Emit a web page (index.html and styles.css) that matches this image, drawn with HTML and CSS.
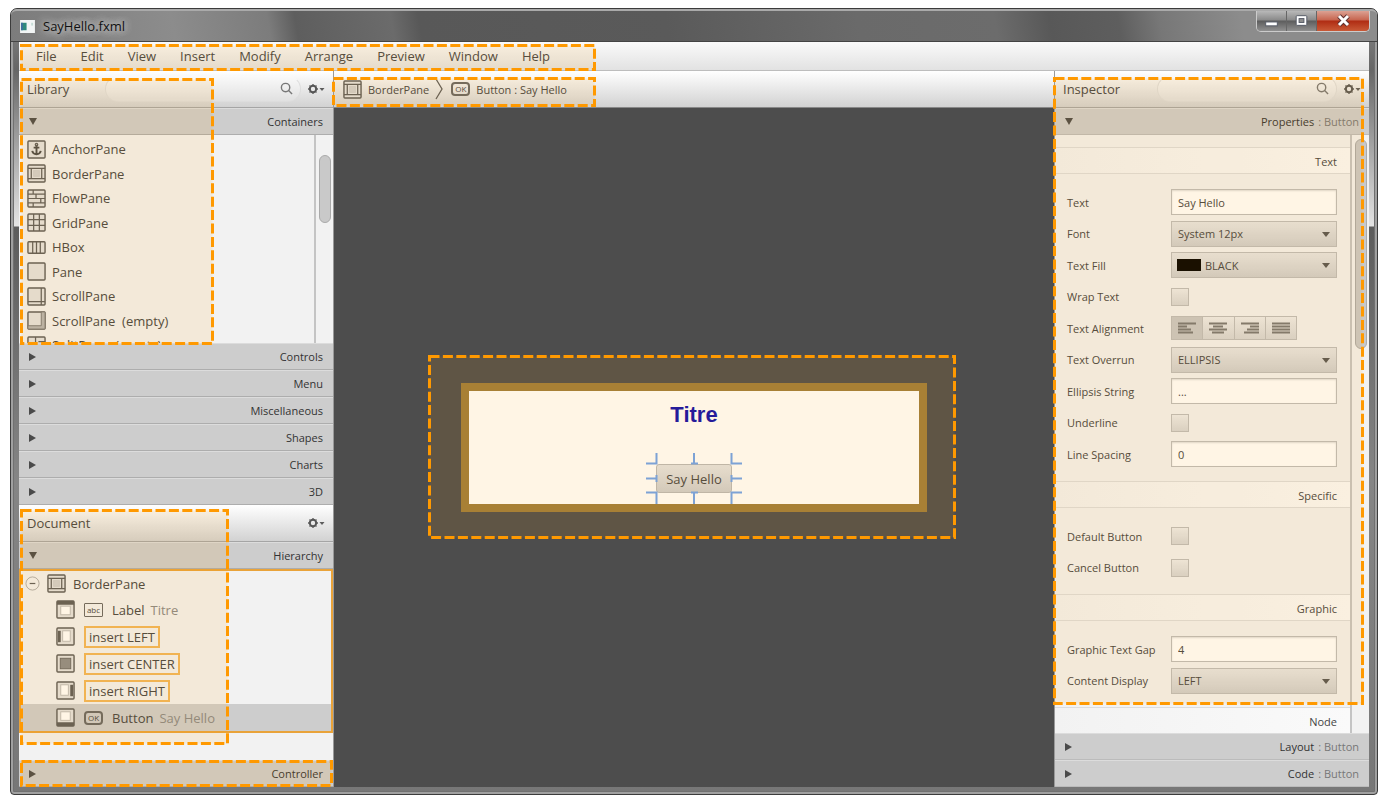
FILE: index.html
```html
<!DOCTYPE html>
<html lang="en">
<head>
  <meta charset="UTF-8" />
  <meta name="viewport" content="width=device-width, initial-scale=1.0"/>
  <title>SayHello.fxml</title>
  <link rel="stylesheet" href="styles.css">
</head>
<body>
  <!-- icon set, reused with <use> -->
  <svg class="sprite" aria-hidden="true">
    <symbol id="i-frame" viewBox="0 0 20 20"><rect x="1" y="1" width="18" height="18" rx="1" class="box"/></symbol>
    <symbol id="i-anchor" viewBox="0 0 20 20"><rect x="1" y="1" width="18" height="18" rx="1" class="box"/><path d="M10 5v10M7 8h6M5.500 11.500c.5 2.500 2 3.500 4.500 3.500s4-1 4.500-3.500" class="thick"/><circle cx="10" cy="4.800" r="1.300" class="line"/></symbol>
    <symbol id="i-border" viewBox="0 0 20 20"><rect x="1" y="1" width="18" height="18" rx="1" class="box"/><path d="M1 4.500h18M1 15.500h18M4.500 4.500v11M15.500 4.500v11" class="line"/><rect x="7" y="7" width="6" height="6" class="soft"/></symbol>
    <symbol id="i-flow" viewBox="0 0 20 20"><rect x="1" y="1" width="18" height="18" rx="1" class="box"/><path d="M1 5.500h18M1 10h18M1 14.500h18M6.500 1v4.500M9.500 5.500V10M14.500 10v4.500M6.500 14.500V19" class="line"/></symbol>
    <symbol id="i-grid" viewBox="0 0 20 20"><rect x="1" y="1" width="18" height="18" rx="1" class="box"/><path d="M1 7h18M1 13h18M7 1v18M13 1v18" class="line"/></symbol>
    <symbol id="i-hbox" viewBox="0 0 20 20"><rect x="1" y="4" width="18" height="12" rx="1" class="box"/><path d="M6 4v12M10 4v12M14 4v12" class="line"/></symbol>
    <symbol id="i-scroll" viewBox="0 0 20 20"><rect x="1" y="1" width="18" height="18" rx="1" class="box"/><path d="M15 1v18M1 15.500h18" class="line"/></symbol>
    <symbol id="i-scroll-empty" viewBox="0 0 20 20"><rect x="1" y="1" width="18" height="18" rx="1" class="box"/><path d="M15 1h4v18H1v-3.500h14z" class="mid"/></symbol>
    <symbol id="i-split" viewBox="0 0 20 20"><rect x="1" y="1" width="18" height="18" rx="1" class="box"/><path d="M9 1v18M12 6h7" class="line"/></symbol>
    <symbol id="i-top" viewBox="0 0 20 20"><rect x="1" y="1" width="18" height="18" rx="1" class="box"/><rect x="1" y="1" width="18" height="4" class="dark"/><rect x="5" y="6.500" width="10" height="9" class="paper"/></symbol>
    <symbol id="i-left" viewBox="0 0 20 20"><rect x="1" y="1" width="18" height="18" rx="1" class="box"/><rect x="2" y="4" width="3" height="12" class="dark"/><rect x="7" y="4" width="8" height="11" class="paper"/></symbol>
    <symbol id="i-center" viewBox="0 0 20 20"><rect x="1" y="1" width="18" height="18" rx="1" class="box"/><rect x="4.500" y="4.500" width="11" height="11" class="fill"/></symbol>
    <symbol id="i-right" viewBox="0 0 20 20"><rect x="1" y="1" width="18" height="18" rx="1" class="box"/><rect x="15" y="4" width="3" height="12" class="dark"/><rect x="5" y="4" width="8" height="11" class="paper"/></symbol>
    <symbol id="i-bottom" viewBox="0 0 20 20"><rect x="1" y="1" width="18" height="18" rx="1" class="box"/><rect x="1" y="15" width="18" height="4" class="dark"/><rect x="5" y="4" width="10" height="9" class="paper"/></symbol>
    <symbol id="i-search" viewBox="0 0 14 14"><circle cx="6" cy="6" r="4.500" class="lens"/><path d="M9 9l4 4" class="lens"/></symbol>
    <symbol id="i-gear" viewBox="0 0 18 12"><circle cx="6" cy="6" r="3.200" class="gear"/><path d="M6 1v1.500M6 9.500V11M1 6h1.500M9.500 6H11M2.500 2.500l1 1M8.500 8.500l1 1M9.500 2.500l-1 1M2.500 9.500l1-1" class="line"/><path d="M12.500 5h5L15 8z" class="dark"/></symbol>
  </svg>

  <div class="window">
    <header class="titlebar">
      <svg class="app-icon" viewBox="0 0 16 14" aria-hidden="true"><rect width="16" height="14" fill="#f2f5f5"/><rect x="1" y="3" width="6" height="8" fill="#2f8a7c"/><rect x="1" y="3" width="2" height="8" fill="#3f6f9f"/><rect x="12" y="3" width="2" height="3" fill="#c5dcd6"/></svg>
      <h1>SayHello.fxml</h1>
      <div class="window-buttons">
        <button aria-label="Minimize"><svg viewBox="0 0 30 20"><rect x="9" y="11" width="12" height="4" fill="#fff" stroke="#555a66"/></svg></button>
        <button aria-label="Maximize"><svg viewBox="0 0 30 20"><rect x="9.500" y="4.500" width="11" height="10" rx="1" fill="#fff" stroke="#555a66"/><rect x="12.500" y="7.500" width="5" height="4" fill="#8f8f8f" stroke="#555a66"/></svg></button>
        <button class="close" aria-label="Close"><svg viewBox="0 0 52 20"><path d="M22 5l9 9M31 5l-9 9" stroke="#5c3030" stroke-width="5"/><path d="M22 5l9 9M31 5l-9 9" stroke="#fff" stroke-width="3"/></svg></button>
      </div>
    </header>

    <div class="content">
      <nav class="menubar">
        <button>File</button>
        <button>Edit</button>
        <button>View</button>
        <button>Insert</button>
        <button>Modify</button>
        <button>Arrange</button>
        <button>Preview</button>
        <button>Window</button>
        <button>Help</button>
        <svg class="highlight on-menu"><rect/></svg>
      </nav>

      <div class="columns">
        <aside class="panel left-panel">
          <section class="library">
            <div class="panel-head">
              <h2>Library</h2>
              <div class="search">
                <input type="search" aria-label="Search library">
                <svg><use href="#i-search"/></svg>
              </div>
              <button class="gear-button" aria-label="Library options"><svg><use href="#i-gear"/></svg></button>
            </div>
            <button class="fold open"><span>Containers</span></button>
            <div class="scroller">
              <ul class="item-list">
                <li><svg><use href="#i-anchor"/></svg>AnchorPane</li>
                <li><svg><use href="#i-border"/></svg>BorderPane</li>
                <li><svg><use href="#i-flow"/></svg>FlowPane</li>
                <li><svg><use href="#i-grid"/></svg>GridPane</li>
                <li><svg><use href="#i-hbox"/></svg>HBox</li>
                <li><svg><use href="#i-frame"/></svg>Pane</li>
                <li><svg><use href="#i-scroll"/></svg>ScrollPane</li>
                <li><svg><use href="#i-scroll-empty"/></svg>ScrollPane &nbsp;(empty)</li>
                <li><svg><use href="#i-split"/></svg>SplitPane &nbsp;(empty)</li>
              </ul>
              <div class="track"><div class="thumb"></div></div>
            </div>
            <button class="fold"><span>Controls</span></button>
            <button class="fold"><span>Menu</span></button>
            <button class="fold"><span>Miscellaneous</span></button>
            <button class="fold"><span>Shapes</span></button>
            <button class="fold"><span>Charts</span></button>
            <button class="fold"><span>3D</span></button>
            <svg class="highlight on-library"><rect/></svg>
          </section>

          <section class="document">
            <div class="panel-head">
              <h2>Document</h2>
              <button class="gear-button" aria-label="Document options"><svg><use href="#i-gear"/></svg></button>
            </div>
            <button class="fold open"><span>Hierarchy</span></button>
            <ul class="tree">
              <li class="root">
                <button class="collapse" aria-label="Collapse"><svg viewBox="0 0 16 16"><circle cx="8" cy="8" r="7" class="ring"/><path d="M5 8h6" class="line"/></svg></button>
                <svg><use href="#i-border"/></svg>BorderPane
              </li>
              <li><svg><use href="#i-top"/></svg><span class="badge abc">abc</span>Label <em>Titre</em></li>
              <li><svg><use href="#i-left"/></svg><span class="insert">insert LEFT</span></li>
              <li><svg><use href="#i-center"/></svg><span class="insert">insert CENTER</span></li>
              <li><svg><use href="#i-right"/></svg><span class="insert">insert RIGHT</span></li>
              <li class="selected"><svg><use href="#i-bottom"/></svg><span class="badge">OK</span>Button <em>Say Hello</em></li>
            </ul>
            <svg class="highlight on-document"><rect/></svg>
          </section>

          <section class="controller">
            <button class="fold"><span>Controller</span></button>
            <svg class="highlight on-controller"><rect/></svg>
          </section>
        </aside>

        <main class="editor">
          <div class="breadcrumb">
            <svg class="crumb-icon"><use href="#i-border"/></svg>
            <a href="#">BorderPane</a>
            <svg class="chevron" viewBox="0 0 8 22"><path d="M1 1l6 10-6 10" class="line"/></svg>
            <span class="badge">OK</span>
            <a href="#">Button : Say Hello</a>
            <svg class="highlight on-breadcrumb"><rect/></svg>
          </div>
          <div class="canvas">
            <div class="stage">
              <p class="stage-title">Titre</p>
              <div class="picked">
                <button>Say Hello</button>
                <svg class="handles" viewBox="0 0 96 51" aria-hidden="true"><path d="M10.500 0v10.500H0M48 0v10.500M45 10.500h7M85.500 0v10.500H96M0 25.500h10.500M10.500 22v7M96 25.500H85.500M85.500 22v7M0 39.500h10.500V51M48 51V39.500M45 39.500h7M96 39.500H85.500V51"/></svg>
              </div>
              <svg class="highlight on-stage"><rect/></svg>
            </div>
          </div>
        </main>

        <aside class="panel right-panel">
          <div class="panel-head">
            <h2>Inspector</h2>
            <div class="search">
              <input type="search" aria-label="Search properties">
              <svg><use href="#i-search"/></svg>
            </div>
            <button class="gear-button" aria-label="Inspector options"><svg><use href="#i-gear"/></svg></button>
          </div>
          <button class="fold open"><span>Properties</span><i>: Button</i></button>
          <div class="scroller">
            <form class="properties">
              <h3>Text</h3>
              <div class="group">
                <div class="row"><label for="text">Text</label><input type="text" id="text" value="Say Hello"></div>
                <div class="row"><label for="font">Font</label><div class="select"><select id="font"><option>System 12px</option></select></div></div>
                <div class="row"><label for="fill">Text Fill</label><div class="select color"><select id="fill"><option>BLACK</option></select></div></div>
                <div class="row"><label for="wrap">Wrap Text</label><input type="checkbox" id="wrap"></div>
                <div class="row">
                  <span id="align">Text Alignment</span>
                  <div class="align" role="group" aria-labelledby="align">
                    <button type="button" class="on" aria-label="Left"><svg viewBox="0 0 20 12"><path d="M1 1.500h18M1 4.500h9M1 7.500h13M1 10.500h15"/></svg></button>
                    <button type="button" aria-label="Center"><svg viewBox="0 0 20 12"><path d="M1 1.500h18M5 4.500h10M1 7.500h18M4 10.500h12"/></svg></button>
                    <button type="button" aria-label="Right"><svg viewBox="0 0 20 12"><path d="M1 1.500h18M10 4.500h9M7 7.500h12M4 10.500h15"/></svg></button>
                    <button type="button" aria-label="Justify"><svg viewBox="0 0 20 12"><path d="M1 1.500h18M1 4.500h18M1 7.500h18M1 10.500h18"/></svg></button>
                  </div>
                </div>
                <div class="row"><label for="overrun">Text Overrun</label><div class="select"><select id="overrun"><option>ELLIPSIS</option></select></div></div>
                <div class="row"><label for="ellipsis">Ellipsis String</label><input type="text" id="ellipsis" value="..."></div>
                <div class="row"><label for="underline">Underline</label><input type="checkbox" id="underline"></div>
                <div class="row"><label for="spacing">Line Spacing</label><input type="text" id="spacing" value="0"></div>
              </div>
              <h3>Specific</h3>
              <div class="group">
                <div class="row"><label for="default">Default Button</label><input type="checkbox" id="default"></div>
                <div class="row"><label for="cancel">Cancel Button</label><input type="checkbox" id="cancel"></div>
              </div>
              <h3>Graphic</h3>
              <div class="group">
                <div class="row"><label for="gap">Graphic Text Gap</label><input type="text" id="gap" value="4"></div>
                <div class="row"><label for="display">Content Display</label><div class="select"><select id="display"><option>LEFT</option></select></div></div>
              </div>
              <h3>Node</h3>
            </form>
            <div class="track"><div class="thumb"></div></div>
          </div>
          <button class="fold"><span>Layout</span><i>: Button</i></button>
          <button class="fold"><span>Code</span><i>: Button</i></button>
          <svg class="highlight on-inspector"><rect/></svg>
        </aside>
      </div>
    </div>
  </div>
</body>
</html>
```

FILE: styles.css
```css
* {
  box-sizing: border-box;
}

body {
  margin: 0;
  height: 100vh;
  padding: 8px 9px 7px 10px;
  background: #fff;
  color: #444;
  font-family: "Open Sans", "Noto Sans", sans-serif;
  font-size: 13px;
}

h1, h2, h3, p, ul {
  margin: 0;
  padding: 0;
  font-weight: normal;
  list-style: none;
}

button, input, select {
  font: inherit;
  color: inherit;
  margin: 0;
}

button {
  padding: 0;
  border: none;
  background: none;
}

a {
  color: inherit;
  text-decoration: none;
}

/* icons */
.sprite {
  position: absolute;
  width: 0;
  height: 0;
}

.box { fill: #e2e2e2; stroke: #5c5c5c; stroke-width: 1.500; }
.line { fill: none; stroke: #5c5c5c; stroke-width: 1.300; }
.thick { fill: none; stroke: #4a4a4a; stroke-width: 2; }
.soft { fill: #d0d0d0; stroke: #ccc; }
.mid { fill: #b5b5b5; stroke: #777; }
.fill { fill: #8c8c8c; stroke: #666; }
.dark { fill: #5c5c5c; }
.paper { fill: #fff; stroke: #bbb; }
.ring { fill: none; stroke: #aaa; }
.lens { fill: none; stroke: #777; stroke-width: 1.500; }
.gear { fill: none; stroke: #555; stroke-width: 2; }

/* dashed callouts */
.highlight {
  position: absolute;
  z-index: 5;
  pointer-events: none;
}

.highlight rect {
  x: 1.5px;
  y: 1.5px;
  width: calc(100% - 3px);
  height: calc(100% - 3px);
  fill: rgba(255, 153, 0, 0.1);
  stroke: #ff9900;
  stroke-width: 3;
  stroke-dasharray: 10 3.4;
}

.on-menu { left: 1px; top: 2px; width: 576px; height: 27px; }
.on-library { left: 1px; top: 7px; width: 194px; height: 267px; }
.on-document { left: 1px; top: 4px; width: 209px; height: 236px; }
.on-controller { left: 1px; top: 0; width: calc(100% - 1px); height: 27px; }
.on-breadcrumb { left: -2px; top: 6px; width: 264px; height: 30px; }
.on-stage { left: -41px; top: -36px; width: calc(100% + 78px); height: calc(100% + 71px); }
.on-inspector { left: -2px; top: 6px; width: 311px; height: calc(100% - 88px); }

/* window frame */
.window {
  height: 100%;
  display: flex;
  flex-direction: column;
  padding: 0 8px 7px;
  border: 1px solid #3c3c3c;
  border-radius: 7px 7px 4px 4px;
  background: linear-gradient(#8a8a8a, #666 60px, #e4e4e4 217px, #5c5c5c 218px, #858585 60%, #777);
  box-shadow: inset 0 0 0 2px #a0a0a0, inset 0 0 0 3px #707070;
}

.titlebar {
  display: flex;
  align-items: center;
  height: 33px;
  flex-shrink: 0;
  margin: 0 -8px;
  padding-left: 9px;
  border-top: 2px solid #aaa;
  border-bottom: 1px solid #444;
  border-radius: 6px 6px 0 0;
  background: linear-gradient(80deg, #7c7c7c, #8c8c8c 12%, #7c7c7c 19%, #5e5e5e 21%, #6b6b6b 28%, #585858 30%, #5a5a5a 48%, #6a6a6a 62%, #6c6c6c 72%, #585858 76%, #5e5e5e 81%, #777 84%, #8c8c8c 90%);
}

.app-icon {
  width: 15px;
  height: 13px;
}

h1 {
  flex: 1;
  margin-left: 3px;
  padding: 0 5px;
  font-size: 13px;
  line-height: 18px;
  color: #111;
  text-shadow: 0 0 8px #ddd, 0 0 8px #ddd;
}

.window-buttons {
  display: flex;
  align-self: flex-start;
  height: 21px;
  margin-right: 7px;
  border: 1px solid #ccc;
  border-top: none;
  border-radius: 0 0 5px 5px;
  overflow: hidden;
}

.window-buttons button {
  width: 30px;
  border-right: 1px solid #666;
  background: linear-gradient(#b8b8b8, #8a8a8a 45%, #5d5d5d 50%, #909090);
}

.window-buttons .close {
  width: 52px;
  border-right: none;
  background: linear-gradient(#dca193, #c7654f 45%, #b02c13 50%, #c95a37);
}

.window-buttons svg {
  display: block;
  width: 100%;
  height: 20px;
}

.content {
  flex: 1;
  min-height: 0;
  display: flex;
  flex-direction: column;
  background: #f2f2f2;
}

.menubar {
  position: relative;
  display: flex;
  gap: 24px;
  height: 29px;
  flex-shrink: 0;
  padding-left: 17px;
  border-bottom: 1px solid #bdbdbd;
  background: linear-gradient(#fafafa, #e2e2e2);
}

.columns {
  flex: 1;
  min-height: 0;
  display: grid;
  grid-template-columns: 314px 1fr 314px;
  gap: 1px;
  background: #999;
}

/* side panels */
.panel {
  position: relative;
  display: flex;
  flex-direction: column;
  min-height: 0;
  background: #f2f2f2;
}

.panel-head {
  display: flex;
  align-items: center;
  height: 37px;
  flex-shrink: 0;
  padding: 0 8px;
  border-bottom: 1px solid #a5a5a5;
  background: linear-gradient(#fff, #d2d2d2);
}

.panel-head h2 {
  flex: 1;
  font-size: 13px;
}

.search {
  position: relative;
  width: 196px;
  height: 26px;
  margin-right: 6px;
}

.right-panel .search {
  width: 180px;
}

.search input {
  width: 100%;
  height: 100%;
  padding: 0 30px 0 12px;
  border: 1px solid #ddd;
  border-top-color: transparent;
  border-radius: 13px;
  outline: none;
  background: rgba(255, 255, 255, 0.2);
}

.search svg {
  position: absolute;
  right: 8px;
  top: 6px;
  width: 13px;
  height: 13px;
}

.gear-button svg {
  display: block;
  width: 18px;
  height: 12px;
}

.fold {
  display: flex;
  justify-content: flex-end;
  align-items: center;
  gap: 4px;
  width: 100%;
  height: 27px;
  flex-shrink: 0;
  padding: 0 10px;
  border-top: 1px solid #dcdcdc;
  border-bottom: 1px solid #adadad;
  background: #cdcdcd;
  color: #333;
  font-size: 11px;
}

.fold::before {
  content: "";
  margin-right: auto;
  border: 4px solid transparent;
  border-left: 7px solid #4a4a4a;
  border-right: none;
}

.fold.open::before {
  border: 4px solid transparent;
  border-top: 7px solid #4a4a4a;
  border-bottom: none;
}

.fold i {
  font-style: normal;
  color: #777;
}

.scroller {
  flex: 1;
  min-height: 0;
  display: flex;
  overflow: hidden;
}

.track {
  width: 19px;
  flex-shrink: 0;
  padding: 20px 3px 0;
  border-left: 2px solid #c4c4c4;
}

.thumb {
  width: 12px;
  height: 68px;
  border: 1px solid #aaa;
  border-radius: 6px;
  background: #c9c9c9;
}

.library {
  position: relative;
  flex: 1;
  min-height: 0;
  display: flex;
  flex-direction: column;
}

.item-list {
  flex: 1;
  padding: 2px 8px 0;
}

.item-list li {
  display: flex;
  align-items: center;
  gap: 6px;
  height: 24px;
}

.item-list li:nth-child(even) {
  height: 25px;
}

.item-list svg, .tree li > svg, .crumb-icon {
  width: 19px;
  height: 19px;
  flex-shrink: 0;
}

.document, .controller {
  position: relative;
}

.document {
  padding-bottom: 27px;
}

.tree {
  border: 2px solid #e9a33a;
}

.tree li {
  display: flex;
  align-items: center;
  gap: 9px;
  height: 27px;
  padding-left: 35px;
}

.tree .root {
  gap: 7px;
  height: 25px;
  padding-left: 4px;
}

.tree .selected {
  background: #cdcdcd;
}

.tree em {
  margin-left: -3px;
  font-style: normal;
  color: #888;
}

.collapse svg {
  display: block;
  width: 15px;
  height: 15px;
}

.badge {
  width: 19px;
  height: 14px;
  border: 2px solid #666;
  border-radius: 4px;
  color: #444;
  font-size: 8px;
  line-height: 10px;
  text-align: center;
}

.badge.abc {
  border-width: 1px;
  border-radius: 1px;
  line-height: 11px;
}

.insert {
  height: 22px;
  padding: 0 3px;
  border: 2px solid #f0b65c;
  line-height: 18px;
}

/* center */
.editor {
  display: flex;
  flex-direction: column;
  min-width: 0;
}

.breadcrumb {
  position: relative;
  display: flex;
  align-items: center;
  gap: 6px;
  height: 37px;
  flex-shrink: 0;
  padding-left: 9px;
  border-bottom: 1px solid #888;
  background: linear-gradient(#fff, #d2d2d2);
  font-size: 11px;
}

.chevron {
  width: 8px;
  height: 22px;
}

.breadcrumb .badge {
  margin-left: 2px;
}

.canvas {
  flex: 1;
  display: flex;
  align-items: center;
  justify-content: center;
  background: #4d4d4d;
}

.stage {
  position: relative;
  width: 466px;
  height: 129px;
  display: flex;
  flex-direction: column;
  align-items: center;
  justify-content: space-between;
  padding: 11px;
  border: 8px solid #9f7d3b;
  background: #fff;
}

.stage-title {
  font-family: "Liberation Sans", Arial, sans-serif;
  font-size: 22px;
  line-height: 26px;
  font-weight: bold;
  color: #0d0dac;
}

.picked {
  position: relative;
}

.picked button {
  display: block;
  width: 76px;
  height: 29px;
  border: 1px solid #b9b9b9;
  border-radius: 3px;
  background: linear-gradient(#e4e4e4, #cfcfcf);
}

.handles {
  position: absolute;
  left: -10px;
  top: -11px;
  width: 96px;
  height: 51px;
  fill: none;
  stroke: #6fa3ee;
  stroke-width: 2;
}

/* inspector */
.right-panel .fold {
  border-bottom-color: #bbb;
}

.right-panel .track {
  padding-top: 4px;
}

.right-panel .thumb {
  height: 210px;
}

.properties {
  flex: 1;
  padding-top: 12px;
  font-size: 11px;
}

.properties h3 {
  height: 27px;
  padding-right: 13px;
  border-top: 1px solid #ddd;
  border-bottom: 1px solid #ddd;
  background: linear-gradient(90deg, #f2f2f2, #fafafa);
  font-size: 11px;
  line-height: 27px;
  text-align: right;
}

.group {
  padding: 12px 13px 11px 12px;
}

.row {
  display: grid;
  grid-template-columns: 104px 1fr;
  align-items: center;
  height: 32px;
}

.row:nth-child(even) {
  height: 31px;
}

.row input[type="text"], .row select {
  width: 100%;
  height: 26px;
  padding: 0 6px;
  border: 1px solid #bdbdbd;
  border-radius: 0;
  outline: none;
  background: #fff;
}

.row input[type="text"] {
  box-shadow: inset 0 1px 2px #ddd;
}

.row select {
  appearance: none;
  background: linear-gradient(#e6e6e6, #cfcfcf);
}

.select {
  position: relative;
}

.select::after {
  content: "";
  position: absolute;
  right: 7px;
  top: 11px;
  border: 4px solid transparent;
  border-top: 5px solid #555;
  border-bottom: none;
}

.select.color select {
  padding-left: 33px;
}

.select.color::before {
  content: "";
  position: absolute;
  left: 6px;
  top: 7px;
  width: 24px;
  height: 12px;
  background: #000;
}

.row input[type="checkbox"] {
  appearance: none;
  width: 18px;
  height: 18px;
  border: 1px solid #bdbdbd;
  background: linear-gradient(#ececec, #d6d6d6);
}

.align {
  display: flex;
  width: 126px;
  height: 24px;
  border: 1px solid #bdbdbd;
}

.align button {
  flex: 1;
  border-left: 1px solid #bdbdbd;
  background: linear-gradient(#ececec, #d6d6d6);
}

.align button:first-child {
  border-left: none;
}

.align .on {
  background: #c8c8c8;
}

.align svg {
  display: block;
  width: 20px;
  height: 12px;
  margin: 0 auto;
  fill: none;
  stroke: #777;
  stroke-width: 2;
}
```
